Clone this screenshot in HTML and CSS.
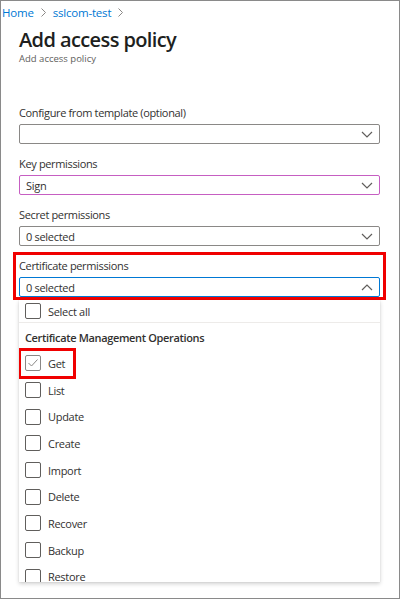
FILE: index.html
```html
<!DOCTYPE html>
<html>
<head>
<meta charset="utf-8">
<link rel="stylesheet" href="styles.css">
</head>
<body>
<div class="frame">
  <div class="crumbs">
    <span class="link">Home</span>
    <svg class="sep" width="5" height="9" viewBox="0 0 5 9"><polyline points="0.5,0.5 4.5,4.5 0.5,8.5" fill="none" stroke="#8a8886" stroke-width="1"/></svg>
    <span class="link">sslcom-test</span>
    <svg class="sep" width="5" height="9" viewBox="0 0 5 9"><polyline points="0.5,0.5 4.5,4.5 0.5,8.5" fill="none" stroke="#8a8886" stroke-width="1"/></svg>
  </div>
  <div class="content">
    <h1 class="title">Add access policy</h1>
    <div class="subtitle">Add access policy</div>

    <div class="field first">
      <div class="label">Configure from template (optional)</div>
      <div class="select">
        <span class="value"></span>
        <svg class="chev" width="12" height="7" viewBox="0 0 12 7"><polyline points="1,1 6,6 11,1" fill="none" stroke="#605e5c" stroke-width="1.2"/></svg>
      </div>
    </div>

    <div class="field">
      <div class="label">Key permissions</div>
      <div class="select hover">
        <span class="value">Sign</span>
        <svg class="chev" width="12" height="7" viewBox="0 0 12 7"><polyline points="1,1 6,6 11,1" fill="none" stroke="#605e5c" stroke-width="1.2"/></svg>
      </div>
    </div>

    <div class="field">
      <div class="label">Secret permissions</div>
      <div class="select">
        <span class="value">0 selected</span>
        <svg class="chev" width="12" height="7" viewBox="0 0 12 7"><polyline points="1,1 6,6 11,1" fill="none" stroke="#605e5c" stroke-width="1.2"/></svg>
      </div>
    </div>

    <div class="field highlight">
      <div class="label">Certificate permissions</div>
      <div class="select open">
        <span class="value">0 selected</span>
        <svg class="chev" width="12" height="7" viewBox="0 0 12 7"><polyline points="1,6 6,1 11,6" fill="none" stroke="#605e5c" stroke-width="1.2"/></svg>
      </div>
    </div>

    <div class="panel">
      <div class="row selectall"><span class="box"></span><span>Select all</span></div>
      <div class="group">Certificate Management Operations</div>
      <div class="row"><span class="mark"><span class="box checked"><svg width="12" height="10" viewBox="0 0 12 10"><polyline points="1.5,5 4.5,8 10.5,1.5" fill="none" stroke="#8a8886" stroke-width="1"/></svg></span><span>Get</span></span></div>
      <div class="row"><span class="box"></span><span>List</span></div>
      <div class="row"><span class="box"></span><span>Update</span></div>
      <div class="row"><span class="box"></span><span>Create</span></div>
      <div class="row"><span class="box"></span><span>Import</span></div>
      <div class="row"><span class="box"></span><span>Delete</span></div>
      <div class="row"><span class="box"></span><span>Recover</span></div>
      <div class="row"><span class="box"></span><span>Backup</span></div>
      <div class="row"><span class="box"></span><span>Restore</span></div>
    </div>
  </div>
</div>
</body>
</html>
```
FILE: styles.css
```css
* { box-sizing: border-box; }
html, body { margin: 0; padding: 0; background: #fff; }
body {
  font-family: "Open Sans", "Noto Sans", sans-serif;
  color: #323130;
}
.frame {
  width: 400px;
  height: 599px;
  border: 1px solid #8a8a8a;
  overflow: hidden;
}
.crumbs {
  display: flex;
  align-items: center;
  gap: 7px;
  height: 22px;
  padding: 0 0 0 1px;
  font-size: 11.5px;
  letter-spacing: -0.2px;
}
.crumbs .link { color: #0078d4; }
.crumbs .sep { flex: none; }
.content {
  padding: 0 19px 0 18px;
}
.title {
  margin: 4px 0 0;
  font-size: 20px;
  font-weight: 600;
  line-height: 26px;
  color: #201f1e;
  letter-spacing: -0.6px;
}
.subtitle {
  font-size: 9.5px;
  line-height: 14px;
  color: #605e5c;
  margin-top: -1px;
}
.field { display: flex; flex-direction: column; }
.field.first { margin-top: 39px; }
.field + .field { margin-top: 12px; }
.label {
  font-size: 11px;
  letter-spacing: -0.35px;
  line-height: 16px;
  margin-bottom: 3px;
}
.select {
  height: 20px;
  border: 1px solid #8a8886;
  border-radius: 2px;
  display: flex;
  align-items: center;
  justify-content: space-between;
  padding: 0 6px 0 6px;
  font-size: 11px;
  letter-spacing: -0.3px;
}
.select.hover { border-color: #c65ec2; }
.select.open { border-color: #0078d4; }
.chev { flex: none; }
.field + .field.highlight {
  margin: 6px -6px 0 -6px;
  padding: 3px 3px 0 3px;
  border: 3px solid #f00000;
}
.panel {
  height: 282px;
  overflow: hidden;
  box-shadow: 0 1.5px 4px rgba(0,0,0,0.18), 0 0 1px rgba(0,0,0,0.12);
  font-size: 11px;
  letter-spacing: -0.3px;
  padding-left: 6px;
}
.row {
  height: 26.7px;
  display: flex;
  align-items: center;
  gap: 7px;
}
.row.selectall {
  height: 23px;
  margin: 0 0 0 -6px;
  padding-left: 6px;
  border-bottom: 1px solid #edebe9;
}
.group {
  font-weight: 600;
  height: 27px;
  padding-top: 3px;
  line-height: 24px;
  letter-spacing: -0.35px;
}
.box {
  width: 16px;
  height: 16px;
  border: 1px solid #605e5c;
  border-radius: 2px;
  flex: none;
  display: flex;
  align-items: center;
  justify-content: center;
}
.box.checked { border-color: #8a8886; }
.mark {
  display: flex;
  align-items: center;
  gap: 7px;
  margin-left: -7px;
  padding: 5px 8px 5px 4px;
  border: 3px solid #f00000;
  height: 31px;
}
```
